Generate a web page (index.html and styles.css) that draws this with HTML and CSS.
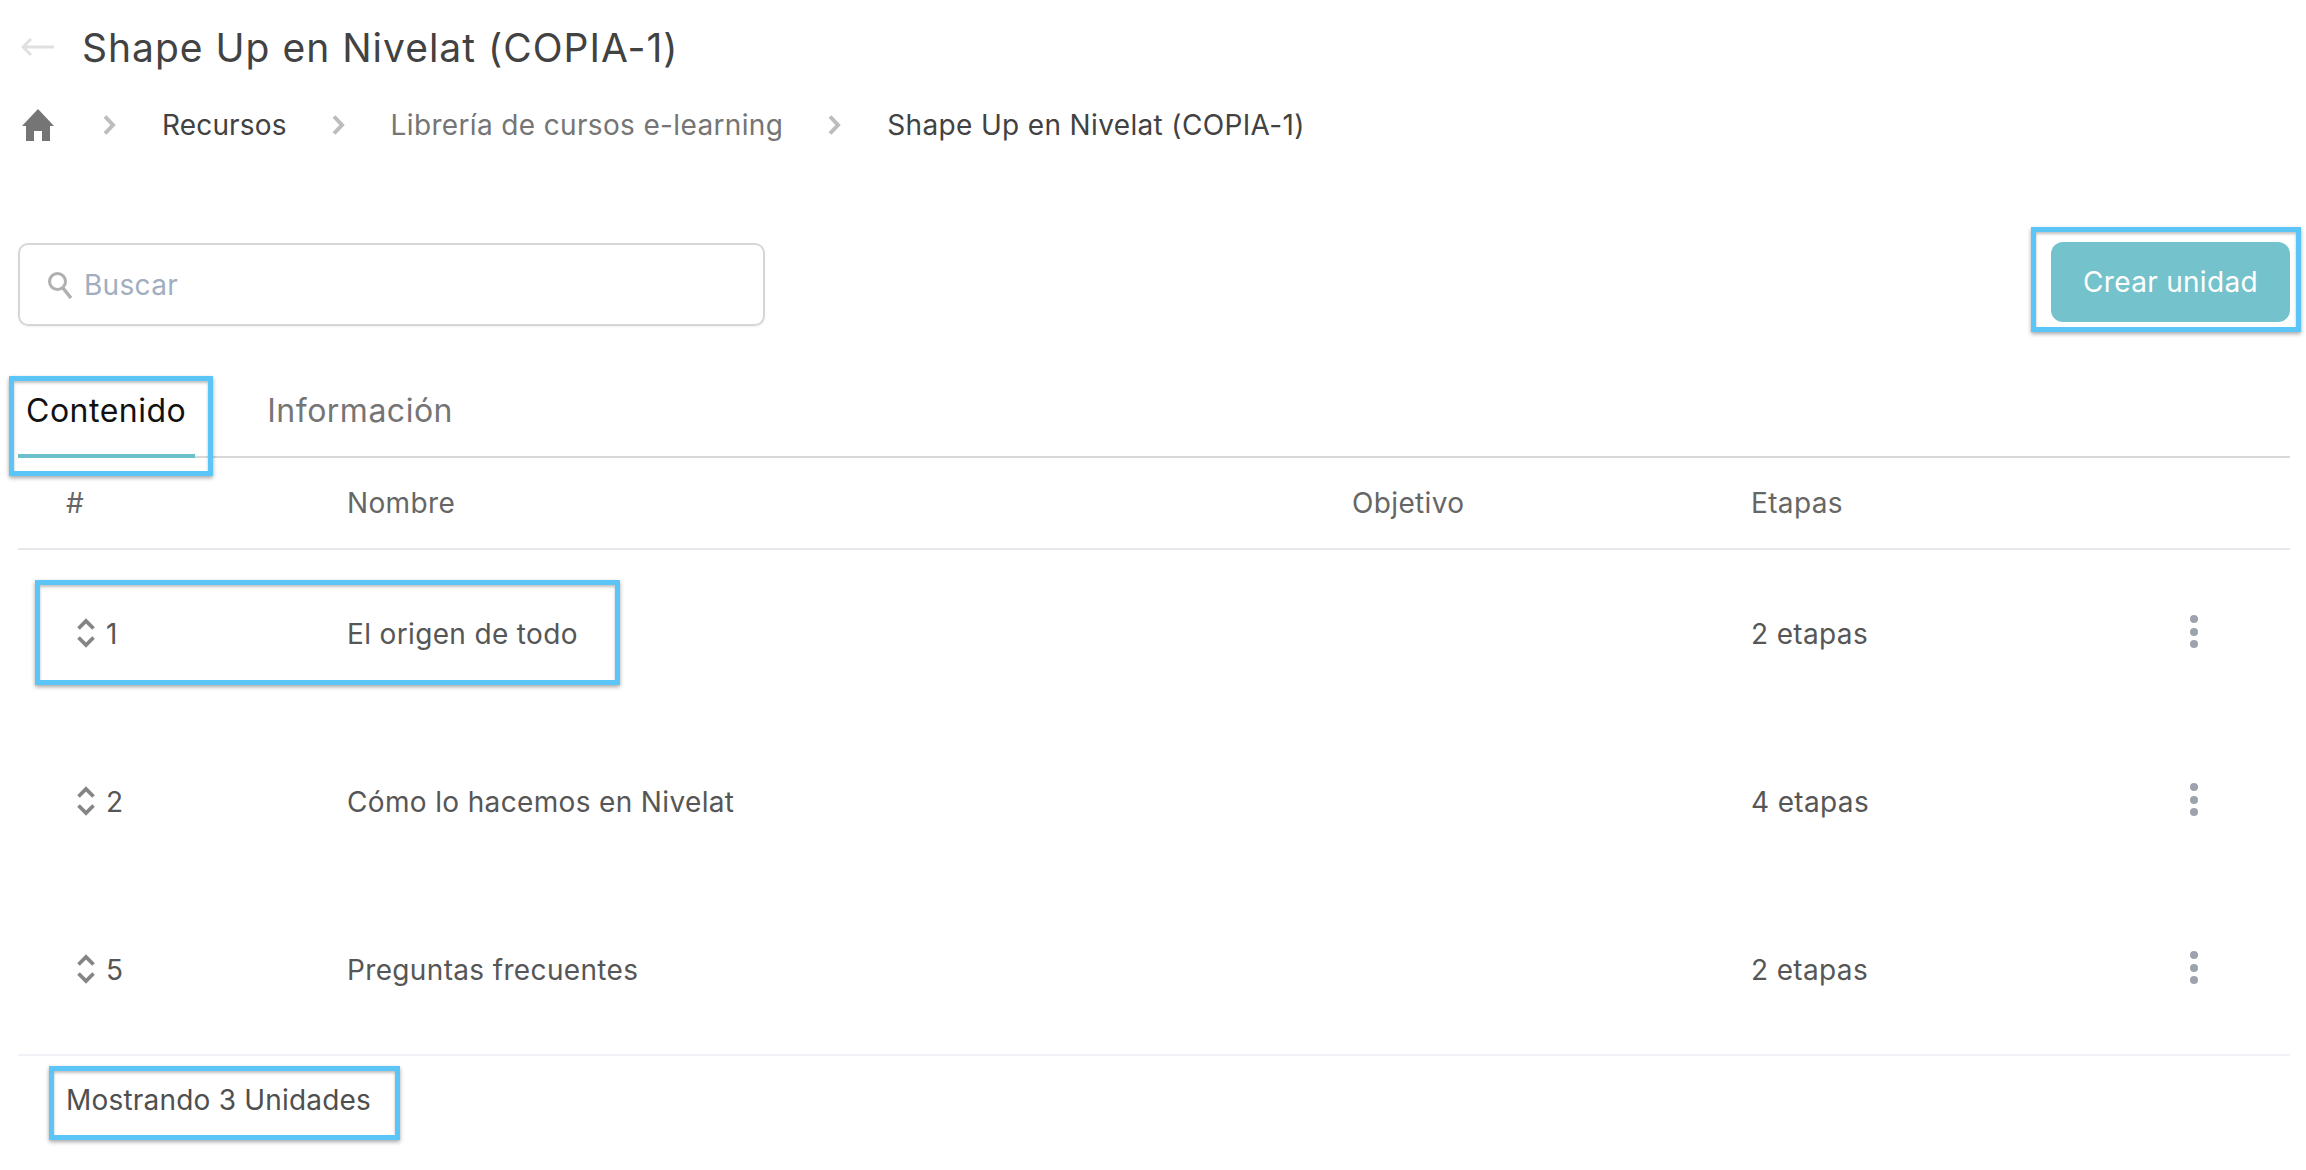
FILE: index.html
```html
<!DOCTYPE html>
<html lang="es">
<head>
<meta charset="utf-8">
<title>Shape Up en Nivelat (COPIA-1)</title>
<link rel="stylesheet" href="styles.css">
</head>
<body>
<div class="page">
  <header class="title-row">
    <svg class="back" viewBox="0 0 34 20" aria-hidden="true"><path d="M33 10H2M10 2 2 10l8 8" fill="none" stroke="#e0e0e0" stroke-width="3"/></svg>
    <h1 class="title">Shape Up en Nivelat (COPIA-1)</h1>
  </header>
  <nav class="crumbs">
    <svg class="home" viewBox="0 0 32 32" aria-hidden="true"><path d="M16 0 32 17h-4v15h-8V22h-8v10H4V17H0z" fill="#757575"/></svg>
    <svg class="chev chev-first" viewBox="0 0 13 20" aria-hidden="true"><path d="m2 1.500 8 8.500-8 8.500" fill="none" stroke="#bdbdbd" stroke-width="4"/></svg>
    <span class="crumb crumb-dark crumb-short">Recursos</span>
    <svg class="chev" viewBox="0 0 13 20" aria-hidden="true"><path d="m2 1.500 8 8.500-8 8.500" fill="none" stroke="#bdbdbd" stroke-width="4"/></svg>
    <span class="crumb crumb-mid">Librería de cursos e-learning</span>
    <svg class="chev" viewBox="0 0 13 20" aria-hidden="true"><path d="m2 1.500 8 8.500-8 8.500" fill="none" stroke="#bdbdbd" stroke-width="4"/></svg>
    <span class="crumb crumb-dark">Shape Up en Nivelat (COPIA-1)</span>
  </nav>
  <section class="toolbar">
    <label class="search">
      <svg class="search-icon" viewBox="0 0 26 28" aria-hidden="true"><circle cx="10.500" cy="10.500" r="8" fill="none" stroke="#b0b0b0" stroke-width="3"/><path d="m16 17 8 10" stroke="#b0b0b0" stroke-width="3.500" fill="none"/></svg>
      <span class="search-text">Buscar</span>
    </label>
    <button class="primary">Crear unidad</button>
  </section>
  <div class="tabs">
    <span class="tab tab-active">Contenido</span>
    <span class="tab">Información</span>
  </div>
  <div class="row head">
    <span>#</span><span>Nombre</span><span>Objetivo</span><span>Etapas</span><span></span>
  </div>
  <div class="row body-row">
    <span class="num"><svg class="sort" viewBox="0 0 18 30" aria-hidden="true"><path d="M1.500 10.500 9 3l7.500 7.500M1.500 19.500 9 27l7.500-7.500" fill="none" stroke="#858585" stroke-width="3.800"/></svg>1</span>
    <span>El origen de todo</span><span></span><span>2 etapas</span>
    <span class="menu"><i></i><i></i><i></i></span>
  </div>
  <div class="row body-row">
    <span class="num"><svg class="sort" viewBox="0 0 18 30" aria-hidden="true"><path d="M1.500 10.500 9 3l7.500 7.500M1.500 19.500 9 27l7.500-7.500" fill="none" stroke="#858585" stroke-width="3.800"/></svg>2</span>
    <span>Cómo lo hacemos en Nivelat</span><span></span><span>4 etapas</span>
    <span class="menu"><i></i><i></i><i></i></span>
  </div>
  <div class="row body-row">
    <span class="num"><svg class="sort" viewBox="0 0 18 30" aria-hidden="true"><path d="M1.500 10.500 9 3l7.500 7.500M1.500 19.500 9 27l7.500-7.500" fill="none" stroke="#858585" stroke-width="3.800"/></svg>5</span>
    <span>Preguntas frecuentes</span><span></span><span>2 etapas</span>
    <span class="menu"><i></i><i></i><i></i></span>
  </div>
  <footer class="foot">Mostrando 3 Unidades</footer>

  <div class="mark mark-btn"></div>
  <div class="mark mark-tab"></div>
  <div class="mark mark-row"></div>
  <div class="mark mark-foot"></div>
</div>
</body>
</html>
```
FILE: styles.css
```css
* { box-sizing: border-box; }
html, body { margin: 0; background: #fff; }
body { font-family: "Inter", "Noto Sans", sans-serif; color: #4f4f4f; overflow: hidden; }
.page { position: relative; width: 2306px; height: 1170px; padding: 0 16px 0 18px; }

.title-row { display: flex; align-items: center; height: 94px; padding-left: 3px; gap: 27px; }
.back { width: 34px; height: 20px; flex: none; }
.title { margin: 0; font-size: 39px; font-weight: 400; color: #424242; letter-spacing: 1px; }

.crumbs { display: flex; align-items: center; height: 62px; padding-left: 4px; }
.home { width: 32px; height: 32px; flex: none; }
.chev { width: 13px; height: 20px; flex: none; margin: 0 46px 0 45px; }
.chev-first { margin-left: 49px; }
.crumb { font-size: 28px; letter-spacing: .35px; }
.crumb-short { letter-spacing: .15px; }
.crumb-dark { color: #424242; }
.crumb-mid { color: #757575; }

.toolbar { display: flex; justify-content: space-between; align-items: flex-start; margin-top: 86px; }
.search { display: flex; align-items: center; width: 747px; height: 83px; margin-top: 1px; padding-left: 27px; border: 2px solid #d6d6d6; border-radius: 10px; box-shadow: 0 1px 2px rgba(0,0,0,.06); }
.search-icon { width: 26px; height: 28px; flex: none; margin-right: 11px; }
.search-text { font-size: 28px; letter-spacing: .3px; color: #a0aec0; }
.primary { width: 239px; height: 80px; border: 0; border-radius: 12px; background: #74c2cb; color: #fff; font: 400 28px "Inter", sans-serif; letter-spacing: .3px; }

.tabs { display: flex; height: 132px; padding-top: 65px; border-bottom: 2px solid #d8d8d8; }
.tab { font-size: 32px; letter-spacing: .5px; color: #757575; padding: 0 9px 0 8px; margin-right: 64px; }
.tab-active { color: #111; position: relative; }
.tab-active::after { content: ""; position: absolute; left: 0; right: 0; bottom: -2px; height: 4px; background: #6cc0c9; }

.row { display: grid; grid-template-columns: 281px 1005px 399px 1fr 100px; align-items: center; padding-left: 48px; font-size: 28px; letter-spacing: .35px; color: #565656; }
.head { height: 92px; border-bottom: 2px solid #e5e7eb; color: #666; }
.body-row { height: 168px; }
.num { display: flex; align-items: center; gap: 11px; padding-left: 11px; }
.sort { width: 18px; height: 30px; flex: none; margin-top: -3px; }
.menu { display: flex; flex-direction: column; align-items: center; gap: 4.500px; width: 8px; margin-top: -5px; }
.menu i { width: 8px; height: 8px; border-radius: 50%; background: #9ca3af; }

.foot { border-top: 2px solid #f0f2f5; padding: 27px 0 0 48px; font-size: 28px; letter-spacing: .2px; color: #4f4f4f; }

.mark { position: absolute; border: 5px solid #5bc5f7; box-shadow: 0 2px 4px rgba(0,0,0,.35), inset 0 2px 3px rgba(0,0,0,.25); }
.mark-btn { left: 2031px; top: 227px; width: 270px; height: 105px; }
.mark-tab { left: 9px; top: 376px; width: 204px; height: 100px; }
.mark-row { left: 35px; top: 580px; width: 585px; height: 105px; }
.mark-foot { left: 49px; top: 1066px; width: 351px; height: 74px; }
```
